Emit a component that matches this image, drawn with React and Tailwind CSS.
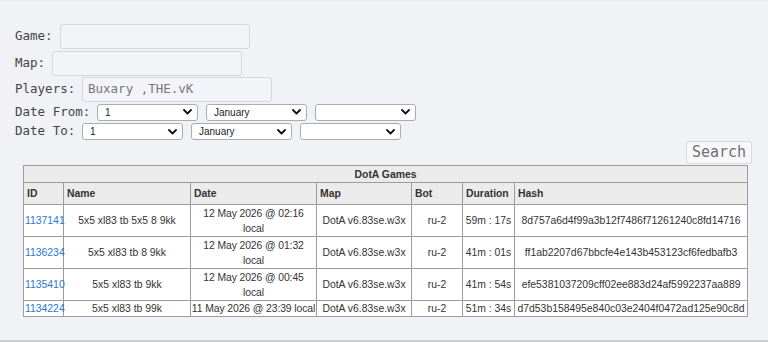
import React from "react";

const mono = { fontFamily: '"DejaVu Sans Mono", monospace' };

function Chevron() {
  return (
    <svg width="9" height="6" viewBox="0 0 9 6" className="absolute right-[5px] top-1/2 -translate-y-1/2 pointer-events-none">
      <path d="M1 1 L4.5 4.5 L8 1" fill="none" stroke="#111" strokeWidth="1.8" strokeLinecap="round" strokeLinejoin="round" />
    </svg>
  );
}

function Sel({ value }) {
  return (
    <div className="relative w-[101px] h-[17px] bg-white border border-[#a9acb1] rounded-[3px] shrink-0">
      <span className="absolute left-[7px] top-0 leading-[15px] text-[10px] text-[#222]" style={{ fontFamily: '"Liberation Sans", Arial, sans-serif' }}>{value}</span>
      <Chevron />
    </div>
  );
}

function Inp({ value }) {
  return (
    <div className="w-[190px] h-[25px] border border-[#d4d8de] rounded-[3px] bg-[#f2f4f7] flex items-center pl-[5px] text-[12.5px] text-[#777]" style={mono}>
      {value}
    </div>
  );
}

const rows = [
  { id: "1137141", name: "5x5 xl83 tb 5x5 8 9kk", date: ["12 May 2026 @ 02:16", "local"], dur: "59m : 17s", hash: "8d757a6d4f99a3b12f7486f71261240c8fd14716" },
  { id: "1136234", name: "5x5 xl83 tb 8 9kk", date: ["12 May 2026 @ 01:32", "local"], dur: "41m : 01s", hash: "ff1ab2207d67bbcfe4e143b453123cf6fedbafb3" },
  { id: "1135410", name: "5x5 xl83 tb 9kk", date: ["12 May 2026 @ 00:45", "local"], dur: "41m : 54s", hash: "efe5381037209cff02ee883d24af5992237aa889" },
  { id: "1134224", name: "5x5 xl83 tb 99k", date: ["11 May 2026 @ 23:39 local"], dur: "51m : 34s", hash: "d7d53b158495e840c03e2404f0472ad125e90c8d" },
];

export default function App() {
  const cell = "border border-[#9c9c9c] px-[1px] py-0 text-center align-middle leading-[15px]";
  const th = "border border-[#9c9c9c] bg-[#ebebeb] text-left font-bold pl-[3px] py-0 leading-[15px] h-[22px]";
  return (
    <div className="h-[342px] bg-[#f0f2f6] border-t border-t-[#e6e9ee] border-b-2 border-b-[#c8ccd3] box-border overflow-hidden">
      <div className="pt-[22px] pl-[15px] pr-[16px] text-[12.5px] text-[#444]" style={mono}>
        <div className="flex items-center h-[27px]">
          <span className="w-[45px]">Game:</span>
          <Inp value="" />
        </div>
        <div className="flex items-center h-[26px]">
          <span className="w-[37px]">Map:</span>
          <Inp value="" />
        </div>
        <div className="flex items-center h-[26px]">
          <span className="w-[67px]">Players:</span>
          <Inp value="Buxary ,THE.vK" />
        </div>
        <div className="flex items-center h-[20px]">
          <span className="w-[82px]">Date From:</span>
          <div className="flex gap-[8px]">
            <Sel value="1" />
            <Sel value="January" />
            <Sel value="" />
          </div>
        </div>
        <div className="flex items-center h-[19px]">
          <span className="w-[67px]">Date To:</span>
          <div className="flex gap-[8px]">
            <Sel value="1" />
            <Sel value="January" />
            <Sel value="" />
          </div>
        </div>
        <div className="flex justify-end">
          <div className="w-[66px] h-[23px] border border-[#d6dae0] bg-[#f7f8fa] rounded-[3px] flex items-center justify-center text-[15px] text-[#707070]" style={mono}>
            Search
          </div>
        </div>
      </div>
      <div className="pl-[23px] pt-[1px]">
        <table className="border-collapse table-fixed w-[724px] text-[10.4px] text-[#333]" style={{ fontFamily: '"Liberation Sans", Arial, sans-serif' }}>
          <colgroup>
            <col className="w-[40px]" />
            <col className="w-[127px]" />
            <col className="w-[126px]" />
            <col className="w-[95px]" />
            <col className="w-[51px]" />
            <col className="w-[52px]" />
            <col className="w-[233px]" />
          </colgroup>
          <thead>
            <tr>
              <th colSpan={7} className="border border-[#9c9c9c] bg-[#ebebeb] text-center font-bold py-0 leading-[15px] h-[17px]">DotA Games</th>
            </tr>
            <tr>
              <th className={th}>ID</th>
              <th className={th}>Name</th>
              <th className={th}>Date</th>
              <th className={th}>Map</th>
              <th className={th}>Bot</th>
              <th className={th}>Duration</th>
              <th className={th}>Hash</th>
            </tr>
          </thead>
          <tbody className="bg-white">
            {rows.map((r, idx) => (
              <tr key={r.id} className={idx === 3 ? "h-[16px]" : "h-[32px]"}>
                <td className={cell + " text-left"}>
                  <a className="text-[#2a78d4]">{r.id}</a>
                </td>
                <td className={cell}>{r.name}</td>
                <td className="border border-[#9c9c9c] p-0 text-center align-middle leading-[15px] whitespace-nowrap tracking-[-0.1px]">
                  {r.date.map((d, i) => (
                    <div key={i}>{d}</div>
                  ))}
                </td>
                <td className={cell}>DotA v6.83se.w3x</td>
                <td className={cell}>ru-2</td>
                <td className={cell + " whitespace-nowrap"}>{r.dur}</td>
                <td className={cell + " whitespace-nowrap"}>{r.hash}</td>
              </tr>
            ))}
          </tbody>
        </table>
      </div>
    </div>
  );
}
